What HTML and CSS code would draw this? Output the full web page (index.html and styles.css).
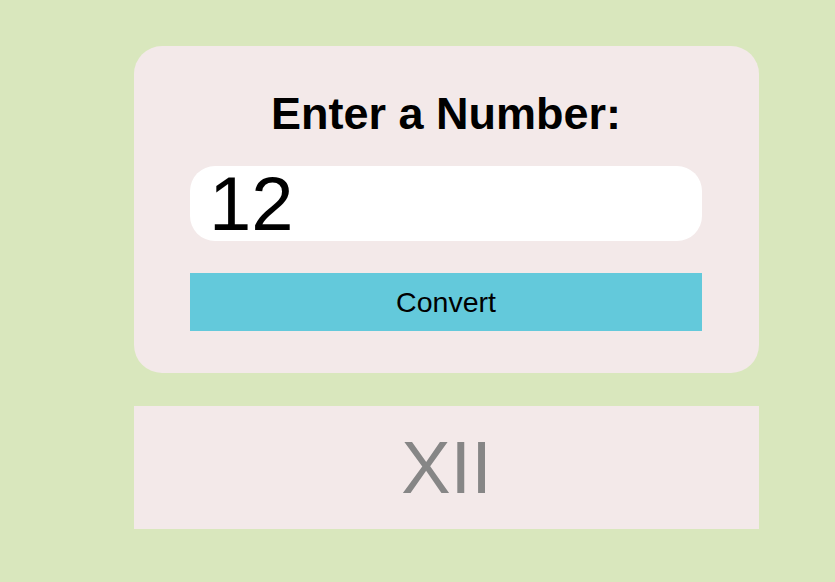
FILE: index.html
```html
<!DOCTYPE html>
<html>
<head>
<meta charset="utf-8">
<link rel="stylesheet" href="styles.css">
</head>
<body>
<main class="container">
  <section class="card">
    <h1 class="title">Enter a Number:</h1>
    <input class="number-input" type="text" value="12">
    <button class="convert-btn">Convert</button>
  </section>
  <div class="result">XII</div>
</main>
</body>
</html>
```
FILE: styles.css
```css
html, body {
  margin: 0;
  padding: 0;
}
body {
  background: #d9e7bd;
  font-family: "Liberation Sans", Arial, sans-serif;
  height: 582px;
  overflow: hidden;
}
.container {
  width: 625px;
  margin-left: 134px;
  padding-top: 46px;
  display: flex;
  flex-direction: column;
  gap: 33px;
}
.card {
  background: #f3e9e9;
  border-radius: 28px;
  padding: 42px 57px 42px 56px;
  display: flex;
  flex-direction: column;
}
.title {
  margin: 0 0 26px;
  font-size: 45px;
  line-height: 52px;
  font-weight: bold;
  text-align: center;
  color: #000;
}
.number-input {
  box-sizing: border-box;
  height: 75px;
  width: 100%;
  border: none;
  outline: none;
  background: #fff;
  border-radius: 25px;
  padding: 0 19px;
  margin: 0 0 32px;
  font-family: "Liberation Sans", Arial, sans-serif;
  font-size: 76px;
  color: #000;
}
.convert-btn {
  height: 58px;
  border: none;
  background: #63c9db;
  font-family: "Liberation Sans", Arial, sans-serif;
  font-size: 28.5px;
  color: #000;
  padding: 0;
  margin: 0;
}
.result {
  background: #f3e9e9;
  height: 123px;
  display: flex;
  align-items: center;
  justify-content: center;
  font-size: 74px;
  color: #868686;
}
```
